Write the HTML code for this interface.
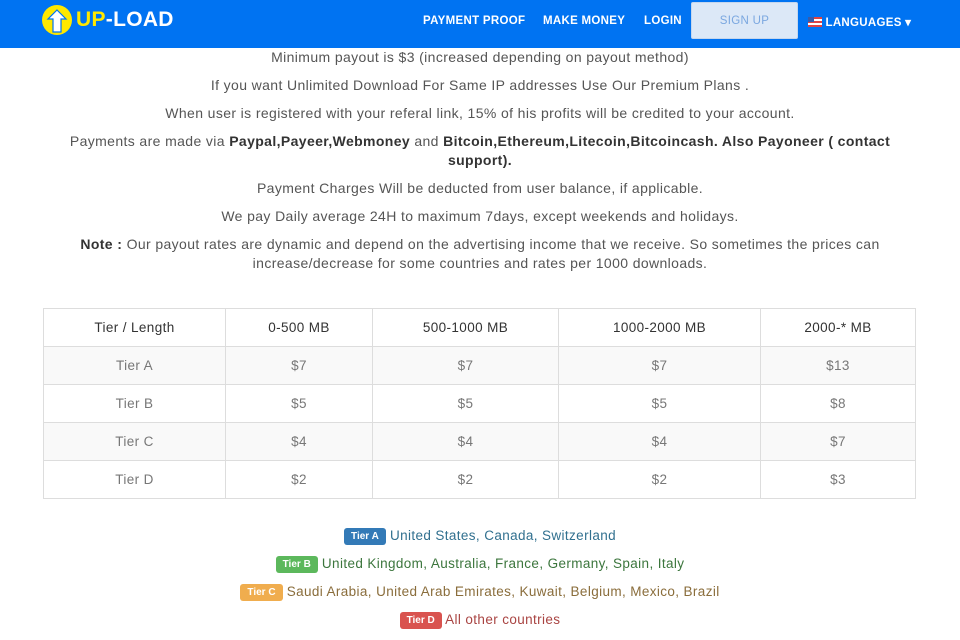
<!DOCTYPE html>
<html><head><meta charset="utf-8"><style>
*{margin:0;padding:0;box-sizing:border-box}
body{width:960px;height:640px;overflow:hidden;background:#fff;font-family:"Liberation Sans",sans-serif;color:#555;font-size:14px;letter-spacing:0.38px}
.nav{height:48px;background:#0073f2;position:relative}
.logo{position:absolute;left:42px;top:5px;display:flex;align-items:center}
.logo .c{width:30px;height:30px;border-radius:50%;background:#ffe800;position:relative}
.logo span{font-weight:bold;font-size:21px;color:#fff;margin-left:4px;letter-spacing:0.3px}
.logo span b{color:#ffe800}
.nl{position:absolute;top:15px;color:#fff;font-weight:bold;font-size:11.5px;letter-spacing:0.3px}
.su{position:absolute;left:691px;top:2px;width:107px;height:37px;background:#dce8f7;border:1px solid #c4d6ee;border-radius:2px;color:#7aa7e0;font-size:11.5px;text-align:center;line-height:36px;letter-spacing:0.3px}
p{text-align:center;line-height:19px;white-space:nowrap}
b{color:#333}
table{position:absolute;left:43px;top:308px;width:873px;border-collapse:collapse;font-size:13.5px}
td{border:1px solid #ddd;text-align:center;height:38px;color:#777}
tr:first-child td{color:#333}
tr:nth-child(even) td{background:#f9f9f9}
.t{position:absolute;left:0;width:960px;text-align:center;font-size:13.5px}
.bd{display:inline-block;color:#fff;font-size:10px;font-weight:bold;padding:3px 7px;border-radius:3px;vertical-align:1px;letter-spacing:0}
</style></head><body>
<div class="nav">
<div class="logo"><div class="c"><svg width="30" height="30" viewBox="0 0 30 30" style="position:absolute;left:0;top:0"><path d="M15 5 L24 14 L19 14 L19 27 L11 27 L11 14 L6 14 Z" fill="#fff" stroke="#0073f2" stroke-width="1.2"/></svg></div><span><b>UP</b>-LOAD</span></div>
<div class="nl" style="left:423px">PAYMENT PROOF</div>
<div class="nl" style="left:543px">MAKE MONEY</div>
<div class="nl" style="left:644px">LOGIN</div>
<div class="su">SIGN UP</div>
<div class="nl" style="left:808px"><span style="display:inline-block;width:14px;height:10px;background:linear-gradient(#d44 0 20%,#fff 20% 40%,#d44 40% 60%,#fff 60% 80%,#d44 80%);vertical-align:-1px;position:relative"><i style="position:absolute;left:0;top:0;width:6px;height:5px;background:#3a5ba8"></i></span> LANGUAGES ▾</div>
</div>
<div style="position:absolute;top:48px;left:30px;width:900px">
<p style="margin-top:0px">Minimum payout is $3 (increased depending on payout method)</p>
<p style="margin-top:9px">If you want Unlimited Download For Same IP addresses Use Our Premium Plans .</p>
<p style="margin-top:9px">When user is registered with your referal link, 15% of his profits will be credited to your account.</p>
<p style="margin-top:9px">Payments are made via <b>Paypal,Payeer,Webmoney</b> and <b>Bitcoin,Ethereum,Litecoin,Bitcoincash. Also Payoneer ( contact<br>support).</b></p>
<p style="margin-top:9px">Payment Charges Will be deducted from user balance, if applicable.</p>
<p style="margin-top:9px">We pay Daily average 24H to maximum 7days, except weekends and holidays.</p>
<p style="margin-top:9px"><b>Note :</b> Our payout rates are dynamic and depend on the advertising income that we receive. So sometimes the prices can<br>increase/decrease for some countries and rates per 1000 downloads.</p>
</div>
<table>
<colgroup><col style="width:182px"><col style="width:147px"><col style="width:186px"><col style="width:202px"><col></colgroup>
<tr><td>Tier / Length</td><td>0-500 MB</td><td>500-1000 MB</td><td>1000-2000 MB</td><td>2000-* MB</td></tr>
<tr><td>Tier A</td><td>$7</td><td>$7</td><td>$7</td><td>$13</td></tr>
<tr><td>Tier B</td><td>$5</td><td>$5</td><td>$5</td><td>$8</td></tr>
<tr><td>Tier C</td><td>$4</td><td>$4</td><td>$4</td><td>$7</td></tr>
<tr><td>Tier D</td><td>$2</td><td>$2</td><td>$2</td><td>$3</td></tr>
</table>
<div class="t" style="top:528px;color:#31708f"><span class="bd" style="background:#337ab7">Tier A</span> United States, Canada, Switzerland</div>
<div class="t" style="top:556px;color:#3c763d"><span class="bd" style="background:#5cb85c">Tier B</span> United Kingdom, Australia, France, Germany, Spain, Italy</div>
<div class="t" style="top:584px;color:#8a6d3b"><span class="bd" style="background:#f0ad4e">Tier C</span> Saudi Arabia, United Arab Emirates, Kuwait, Belgium, Mexico, Brazil</div>
<div class="t" style="top:612px;color:#a94442"><span class="bd" style="background:#d9534f">Tier D</span> All other countries</div>
</body></html>
